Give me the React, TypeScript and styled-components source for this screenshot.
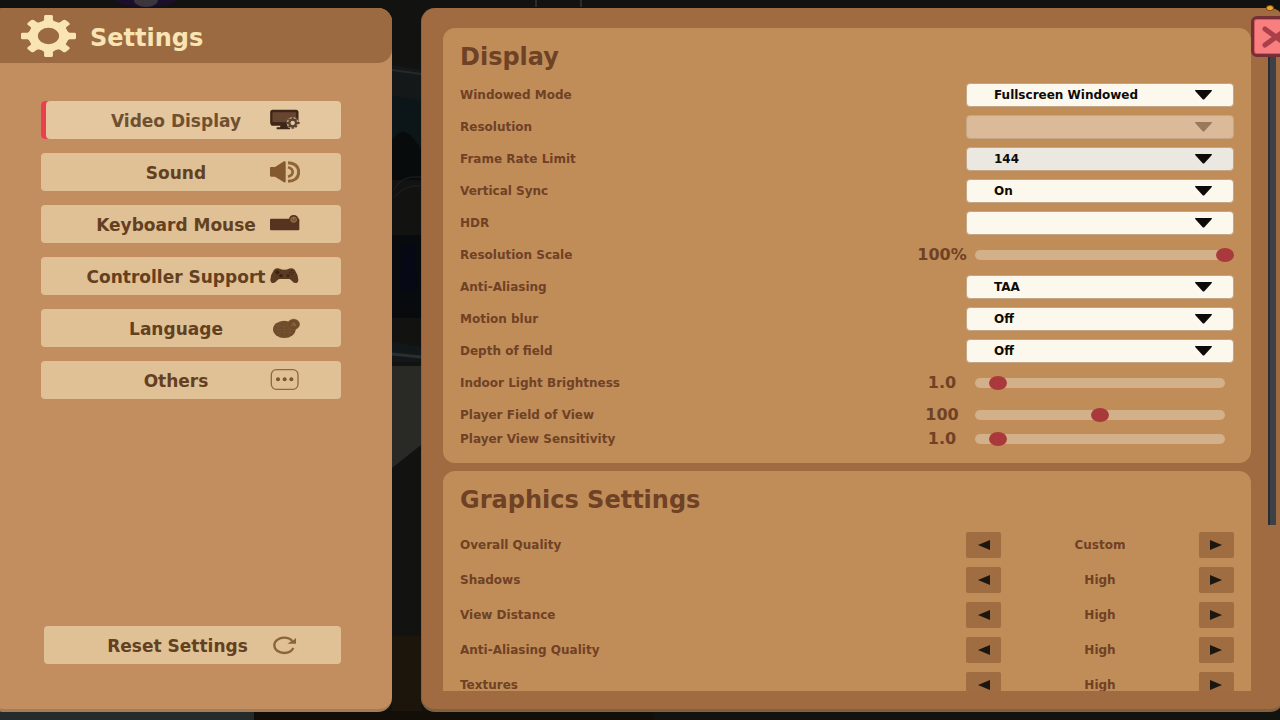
import React, { useState } from "react";
import styled, { createGlobalStyle, css } from "styled-components";

const Global = createGlobalStyle`
  *, *::before, *::after { box-sizing: border-box; }
  body {
    margin: 0;
    overflow: hidden;
    background: #131210;
    font-family: "DejaVu Sans", Verdana, sans-serif;
    font-weight: 700;
  }
  button, select, input { font: inherit; color: inherit; }
`;

const Screen = styled.main`
  position: relative;
  display: grid;
  grid-template-columns: minmax(0, 392fr) minmax(0, 859fr);
  gap: 29px;
  height: 100vh;
  padding: 8px 0;
  overflow: hidden;
`;

const Scenery = styled.svg`
  position: absolute;
  inset: 0;
  width: 100%;
  height: 100%;
`;

const Sidebar = styled.aside`
  position: relative;
  display: flex;
  flex-direction: column;
  margin-left: -10px;
  padding-left: 10px;
  border-radius: 14px;
  border-bottom: 3px solid #a47c57;
  background: #c28d5f;
`;

const SidebarHeader = styled.header`
  display: flex;
  align-items: center;
  gap: 14px;
  height: 55px;
  margin-left: -10px;
  padding-left: 31px;
  border-radius: 14px 14px 14px 0;
  background: #9c6a40;
  color: #f9e5b4;
`;

const PageTitle = styled.h1`
  margin: 0;
  font-size: 24px;
  line-height: 32px;
  padding-top: 4px;
`;

const GearArt = styled.svg`
  width: 55px;
  height: 42px;
`;

const Menu = styled.nav`
  display: flex;
  flex-direction: column;
  gap: 14px;
  margin: 38px 51px 0 41px;
`;

const MenuButton = styled.button<{ $active?: boolean }>`
  display: grid;
  grid-template-columns: minmax(0, 1fr) 30px;
  align-items: center;
  width: 100%;
  height: 38px;
  padding: 0 41px 0 41px;
  border: 0;
  border-radius: 4px;
  background: #e0c195;
  color: #63401f;
  font-size: 17px;
  line-height: 24px;
  white-space: nowrap;
  cursor: pointer;
  > span {
    padding-top: 2px;
  }
  ${(p) =>
    p.$active &&
    css`
      background: #e4c79f;
      box-shadow: inset 5px 0 #ec3f4d;
      color: #70502f;
    `}
`;

const Footer = styled.div`
  margin: auto 51px 45px 44px;
`;

const IconArt = styled.svg`
  width: 30px;
  height: 22px;
`;

const Panel = styled.section`
  position: relative;
  display: grid;
  grid-template-columns: minmax(0, 1fr) 8px;
  gap: 17px;
  min-height: 0;
  margin-right: -4px;
  padding: 20px 8px 18px 21px;
  border-left: 1px solid #85654a;
  border-bottom: 3px solid #80603f;
  border-radius: 14px;
  background: #a06b41;
`;

const ScrollArea = styled.div`
  display: flex;
  flex-direction: column;
  gap: 8px;
  min-height: 0;
  overflow-y: auto;
  scrollbar-width: none;
`;

const ScrollRail = styled.div`
  height: 75%;
  border-left: 2px solid #292d33;
  background: #3d4146;
`;

const Card = styled.section`
  flex: none;
  padding: 13px 17px 12px 17px;
  border-radius: 12px;
  background: #c08d59;
  color: #6f4125;
`;

const CardTitle = styled.h2`
  margin: 0;
  font-size: 24px;
  line-height: 32px;
`;

const Rows = styled.div<{ $gap: number; $top: number }>`
  display: flex;
  flex-direction: column;
  gap: ${(p) => p.$gap}px;
  padding-top: ${(p) => p.$top}px;
`;

const Row = styled.div`
  display: grid;
  grid-template-columns: minmax(0, 1fr) 48px 268px;
  align-items: center;
  min-height: 24px;
  font-size: 12px;
  line-height: 16px;
`;

const RowLabel = styled.label`
  grid-column: 1;
`;

const RowName = styled.span`
  grid-column: 1;
`;

const Reading = styled.output`
  grid-column: 2;
  justify-self: center;
  font-size: 16px;
  line-height: 20px;
`;

const Dropdown = styled.div<{ $off?: boolean }>`
  grid-column: 3;
  display: grid;
  align-items: center;
  color: ${(p) => (p.$off ? "#98795b" : "#0d0b09")};
  > * {
    grid-area: 1 / 1;
  }
`;

const DropdownBox = styled.select<{ $tone?: string }>`
  width: 100%;
  height: 24px;
  padding: 0 44px 0 27px;
  appearance: none;
  border: 1px solid #c3a686;
  border-radius: 4px;
  background: ${(p) => p.$tone ?? "#fdf8ee"};
  line-height: 16px;
  opacity: 1;
`;

const DropdownArrow = styled.svg`
  justify-self: end;
  width: 17px;
  height: 10px;
  margin-right: 22px;
  pointer-events: none;
`;

const SliderTrack = styled.div`
  grid-column: 3;
  display: grid;
  align-items: center;
  &::before {
    content: "";
    grid-area: 1 / 1;
    height: 10px;
    margin: 0 9px;
    border-radius: 5px;
    background: #d2b08a;
  }
`;

const SliderInput = styled.input`
  grid-area: 1 / 1;
  width: 100%;
  height: 14px;
  margin: 0;
  appearance: none;
  background: transparent;
  &::-webkit-slider-thumb {
    appearance: none;
    width: 18px;
    height: 14px;
    border: 0;
    border-radius: 50%;
    background: #a9393b;
  }
`;

const Stepper = styled.div`
  grid-column: 3;
  display: flex;
  align-items: center;
  justify-content: space-between;
`;

const StepButton = styled.button`
  display: grid;
  place-items: center;
  width: 35px;
  height: 26px;
  padding: 0;
  border: 0;
  border-radius: 2px;
  background: #a06c41;
  color: #1b160f;
  cursor: pointer;
`;

const StepArrow = styled.svg`
  width: 12px;
  height: 10px;
`;

const CloseButton = styled.button`
  position: absolute;
  top: 8px;
  right: -17px;
  display: grid;
  place-items: center;
  width: 50px;
  height: 41px;
  padding: 0;
  border: 3px solid #743036;
  border-radius: 6px;
  background: #f87e7f;
  box-shadow: inset 0 0 0 1px #d45c61;
  cursor: pointer;
`;

const CloseArt = styled.svg`
  width: 28px;
  height: 22px;
`;

const Beacon = styled.span`
  position: absolute;
  top: -3px;
  right: 10px;
  width: 8px;
  height: 6px;
  border: 1px solid #7a4a12;
  border-radius: 50%;
  background: #f0a92c;
`;

const GearIcon = () => (
  <GearArt viewBox="-50 -50 100 100" preserveAspectRatio="none" aria-hidden="true">
    <circle r="28" fill="none" stroke="currentColor" strokeWidth="17" />
    {[0, 90, 180, 270].map((a) => (
      <path key={a} d="M-13-32-8-38V-47Q-8-50-5-50H5Q8-50 8-47V-38L13-32Z" fill="currentColor" transform={`rotate(${a})`} />
    ))}
    {[45, 135, 225, 315].map((a) => (
      <path key={a} d="M-12-30-8-38V-45Q-8-49-4-49H4Q8-49 8-45V-38L12-30Z" fill="currentColor" transform={`rotate(${a})`} />
    ))}
  </GearArt>
);

const MonitorIcon = () => (
  <IconArt viewBox="0 0 90 66" aria-hidden="true">
    <rect x="4" y="6" width="78" height="38" rx="4" fill="#674631" stroke="#3d2618" strokeWidth="7" />
    <path d="M2 40H84V45Q84 50 80 50H6Q2 50 2 45Z" fill="#3d2618" />
    <path d="M32 48H52L54 55H60V61H20V55H30Z" fill="#3d2618" />
    <circle cx="68" cy="42" r="18" fill="#c9a982" />
    <circle cx="68" cy="42" r="10" fill="none" stroke="#5b4331" strokeWidth="7" />
    <path d="M68 25V32M68 52V59M51 42H58M78 42H89M56 30 61 35M75 49 80 54M56 54 61 49M75 35 80 30" stroke="#5b4331" strokeWidth="6" />
    <circle cx="68" cy="42" r="6" fill="#e4c79f" />
  </IconArt>
);

const SpeakerIcon = () => (
  <IconArt viewBox="0 0 90 66" aria-hidden="true">
    <path d="M0 22Q0 18 3 18H15L42 1Q47-1 47 4V61Q47 66 42 64L15 47H3Q0 47 0 43Z" fill="#85592f" />
    <path d="M54 5Q86 7 86 33T54 61" fill="none" stroke="#8f6436" strokeWidth="9" />
    <path d="M54 19Q68 23 68 33T54 47" fill="none" stroke="#8f6436" strokeWidth="8" />
  </IconArt>
);

const KeyboardIcon = () => (
  <IconArt viewBox="0 0 90 66" aria-hidden="true">
    <rect x="0" y="17" width="88" height="35" rx="3" fill="#553320" />
    <path d="M8 25H54M8 32H54M8 39H54" stroke="#65432a" strokeWidth="1" strokeDasharray="5 3" />
    <path d="M56 22Q58 6 71 6T87 22V34H56Z" fill="#553320" />
    <ellipse cx="71" cy="20" rx="9" ry="8" fill="#7a5836" stroke="#a8834f" strokeWidth="2" />
    <path d="M71 12V20" stroke="#b99465" strokeWidth="2" />
  </IconArt>
);

const GamepadIcon = () => (
  <IconArt viewBox="0 0 90 66" aria-hidden="true">
    <path d="M12 14Q20 7 30 11Q33 14 43 14T56 11Q66 7 74 14Q84 28 85 44Q85 54 76 54C68 54 66 44 57 42H29C20 44 18 54 10 54Q1 54 1 44Q2 28 12 14Z" fill="#5b3a22" />
    <path d="M22 16V28M16 22H28" stroke="#35200f" strokeWidth="5" />
    <circle cx="33" cy="32" r="5" fill="#35200f" />
    <circle cx="54" cy="32" r="5" fill="#402816" />
    <path d="M65 15V18M65 26V29M58 22H61M69 22H72" stroke="#35200f" strokeWidth="4" />
  </IconArt>
);

const GlobeIcon = () => (
  <IconArt viewBox="0 0 90 66" aria-hidden="true">
    <ellipse cx="43" cy="37" rx="34" ry="26" fill="#6f4b2b" />
    <path d="M10 37H74M15 25Q42 33 69 25M15 48Q42 40 69 48M43 12V62M30 14Q18 36 30 60M54 14Q66 36 54 60" fill="none" stroke="#84603a" strokeWidth="1" />
    <ellipse cx="71" cy="22" rx="18" ry="16" fill="#6f4b2b" stroke="#84603a" strokeWidth="1" />
    <path d="M64 28 71 16 78 28M67 24H76" fill="none" stroke="#8f6b42" strokeWidth="3" />
  </IconArt>
);

const MoreIcon = () => (
  <IconArt viewBox="0 0 90 66" aria-hidden="true">
    <rect x="4" y="2" width="80" height="59" rx="15" fill="none" stroke="#8f6a40" strokeWidth="4" />
    <circle cx="24" cy="31" r="6" fill="#7a5530" />
    <circle cx="44" cy="31" r="6" fill="#7a5530" />
    <circle cx="64" cy="31" r="6" fill="#7a5530" />
  </IconArt>
);

const ResetIcon = () => (
  <IconArt viewBox="0 0 90 66" aria-hidden="true">
    <path d="M67 21Q58 11 43 11C26 11 13 21 13 34S26 57 43 57Q62 57 70 42" fill="none" stroke="#8b6439" strokeWidth="7" />
    <path d="M78 12V29H52L60 24 68 20Z" fill="#8b6439" />
  </IconArt>
);

const menu = [
  { name: "Video Display", Icon: MonitorIcon },
  { name: "Sound", Icon: SpeakerIcon },
  { name: "Keyboard Mouse", Icon: KeyboardIcon },
  { name: "Controller Support", Icon: GamepadIcon },
  { name: "Language", Icon: GlobeIcon },
  { name: "Others", Icon: MoreIcon },
];

type SelectProps = { id: string; name: string; options?: string[]; tone?: string; off?: boolean };

const SelectRow = ({ id, name, options = [""], tone, off }: SelectProps) => (
  <Row>
    <RowLabel htmlFor={id}>{name}</RowLabel>
    <Dropdown $off={off}>
      <DropdownBox id={id} $tone={tone} disabled={off}>
        {options.map((o) => (
          <option key={o}>{o}</option>
        ))}
      </DropdownBox>
      <DropdownArrow viewBox="0 0 16 10" preserveAspectRatio="none" aria-hidden="true">
        <path d="M0 0H16Q16 1 15 2L9 9Q8 10 7 9L1 2Q0 1 0 0Z" fill="currentColor" />
      </DropdownArrow>
    </Dropdown>
  </Row>
);

type SliderProps = {
  id: string;
  name: string;
  min: number;
  max: number;
  step: number;
  start: number;
  format: (v: number) => string;
};

const SliderRow = ({ id, name, min, max, step, start, format }: SliderProps) => {
  const [value, setValue] = useState(start);
  return (
    <Row>
      <RowLabel htmlFor={id}>{name}</RowLabel>
      <Reading htmlFor={id}>{format(value)}</Reading>
      <SliderTrack>
        <SliderInput
          id={id}
          type="range"
          min={min}
          max={max}
          step={step}
          value={value}
          onChange={(e) => setValue(Number(e.target.value))}
        />
      </SliderTrack>
    </Row>
  );
};

const levels = ["Low", "Medium", "High", "Custom"];

const StepperRow = ({ name, start }: { name: string; start: string }) => {
  const [index, setIndex] = useState(levels.indexOf(start));
  const move = (by: number) => setIndex((i) => (i + by + levels.length) % levels.length);
  return (
    <Row>
      <RowName>{name}</RowName>
      <Stepper role="group" aria-label={name}>
        <StepButton type="button" aria-label="Previous" onClick={() => move(-1)}>
          <StepArrow viewBox="0 0 12 10" aria-hidden="true">
            <path d="M12 0V10L0 5Z" fill="currentColor" />
          </StepArrow>
        </StepButton>
        <span>{levels[index]}</span>
        <StepButton type="button" aria-label="Next" onClick={() => move(1)}>
          <StepArrow viewBox="0 0 12 10" aria-hidden="true">
            <path d="M0 0V10L12 5Z" fill="currentColor" />
          </StepArrow>
        </StepButton>
      </Stepper>
    </Row>
  );
};

const oneDecimal = (v: number) => v.toFixed(1);

export default function App() {
  const [active, setActive] = useState("Video Display");
  return (
    <>
      <Global />
      <Screen>
        <Scenery viewBox="0 0 1280 720" preserveAspectRatio="none" aria-hidden="true">
          <rect width="1280" height="720" fill="#121211" />
          <ellipse cx="146" cy="0" rx="30" ry="7" fill="#1c0f2c" />
          <ellipse cx="146" cy="0" rx="12" ry="7" fill="#3a363c" />
          <path d="M536 0V7M581 0V7" stroke="#2c2c2a" strokeWidth="2" />
          <path d="M392 65 421 70V115L392 105Z" fill="#141819" />
          <path d="M392 70 421 74" stroke="#252927" strokeWidth="2" />
          <path d="M392 96 421 100V145H392Z" fill="#0c1518" />
          <path d="M392 140Q405 120 421 150V180H392Z" fill="#070b0c" />
          <path d="M394 190Q400 175 421 177M394 197Q406 184 421 186" stroke="#1e2322" fill="none" />
          <path d="M392 235H421V318H392Z" fill="#070b0d" />
          <path d="M402 245H415L417 290H400Z" fill="#060816" />
          <path d="M392 342 421 347V362H392Z" fill="#12181a" />
          <path d="M392 354 421 357" stroke="#2a2e2d" strokeWidth="3" />
          <path d="M392 366H421V445L392 468Z" fill="#292a26" />
          <rect x="392" y="636" width="30" height="84" fill="#1c150b" />
          <rect y="711" width="254" height="9" fill="#252a2a" />
          <rect x="254" y="711" width="400" height="9" fill="#130e08" />
          <rect x="654" y="711" width="626" height="9" fill="#11130f" />
        </Scenery>

        <Sidebar>
          <SidebarHeader>
            <GearIcon />
            <PageTitle>Settings</PageTitle>
          </SidebarHeader>
          <Menu aria-label="Settings sections">
            {menu.map(({ name, Icon }) => (
              <MenuButton key={name} type="button" $active={name === active} onClick={() => setActive(name)}>
                <span>{name}</span>
                <Icon />
              </MenuButton>
            ))}
          </Menu>
          <Footer>
            <MenuButton type="button">
              <span>Reset Settings</span>
              <ResetIcon />
            </MenuButton>
          </Footer>
        </Sidebar>

        <Panel>
          <ScrollArea>
            <Card>
              <CardTitle>Display</CardTitle>
              <Rows $gap={8} $top={10}>
                <SelectRow id="window" name="Windowed Mode" options={["Fullscreen Windowed", "Windowed"]} />
                <SelectRow id="resolution" name="Resolution" tone="#dbba9a" off />
                <SelectRow id="fps" name="Frame Rate Limit" options={["144", "60"]} tone="#ebe8e2" />
                <SelectRow id="vsync" name="Vertical Sync" options={["On", "Off"]} />
                <SelectRow id="hdr" name="HDR" />
                <SliderRow id="scale" name="Resolution Scale" min={0} max={100} step={1} start={100} format={(v) => `${v}%`} />
                <SelectRow id="aa" name="Anti-Aliasing" options={["TAA", "FXAA"]} />
                <SelectRow id="blur" name="Motion blur" options={["Off", "On"]} />
                <SelectRow id="dof" name="Depth of field" options={["Off", "On"]} />
                <SliderRow id="light" name="Indoor Light Brightness" min={0.1} max={10} step={0.1} start={1} format={oneDecimal} />
                <Rows $gap={0} $top={0}>
                  <SliderRow id="fov" name="Player Field of View" min={80} max={120} step={1} start={100} format={String} />
                  <SliderRow id="sens" name="Player View Sensitivity" min={0.1} max={10} step={0.1} start={1} format={oneDecimal} />
                </Rows>
              </Rows>
            </Card>
            <Card>
              <CardTitle>Graphics Settings</CardTitle>
              <Rows $gap={9} $top={16}>
                <StepperRow name="Overall Quality" start="Custom" />
                <StepperRow name="Shadows" start="High" />
                <StepperRow name="View Distance" start="High" />
                <StepperRow name="Anti-Aliasing Quality" start="High" />
                <StepperRow name="Textures" start="High" />
              </Rows>
            </Card>
          </ScrollArea>
          <ScrollRail />
          <CloseButton type="button" aria-label="Close">
            <CloseArt viewBox="0 0 28 22" aria-hidden="true">
              <path d="M3 3 25 19M25 3 3 19" stroke="#a83f49" strokeWidth="5" strokeLinecap="round" />
            </CloseArt>
          </CloseButton>
          <Beacon />
        </Panel>
      </Screen>
    </>
  );
}
